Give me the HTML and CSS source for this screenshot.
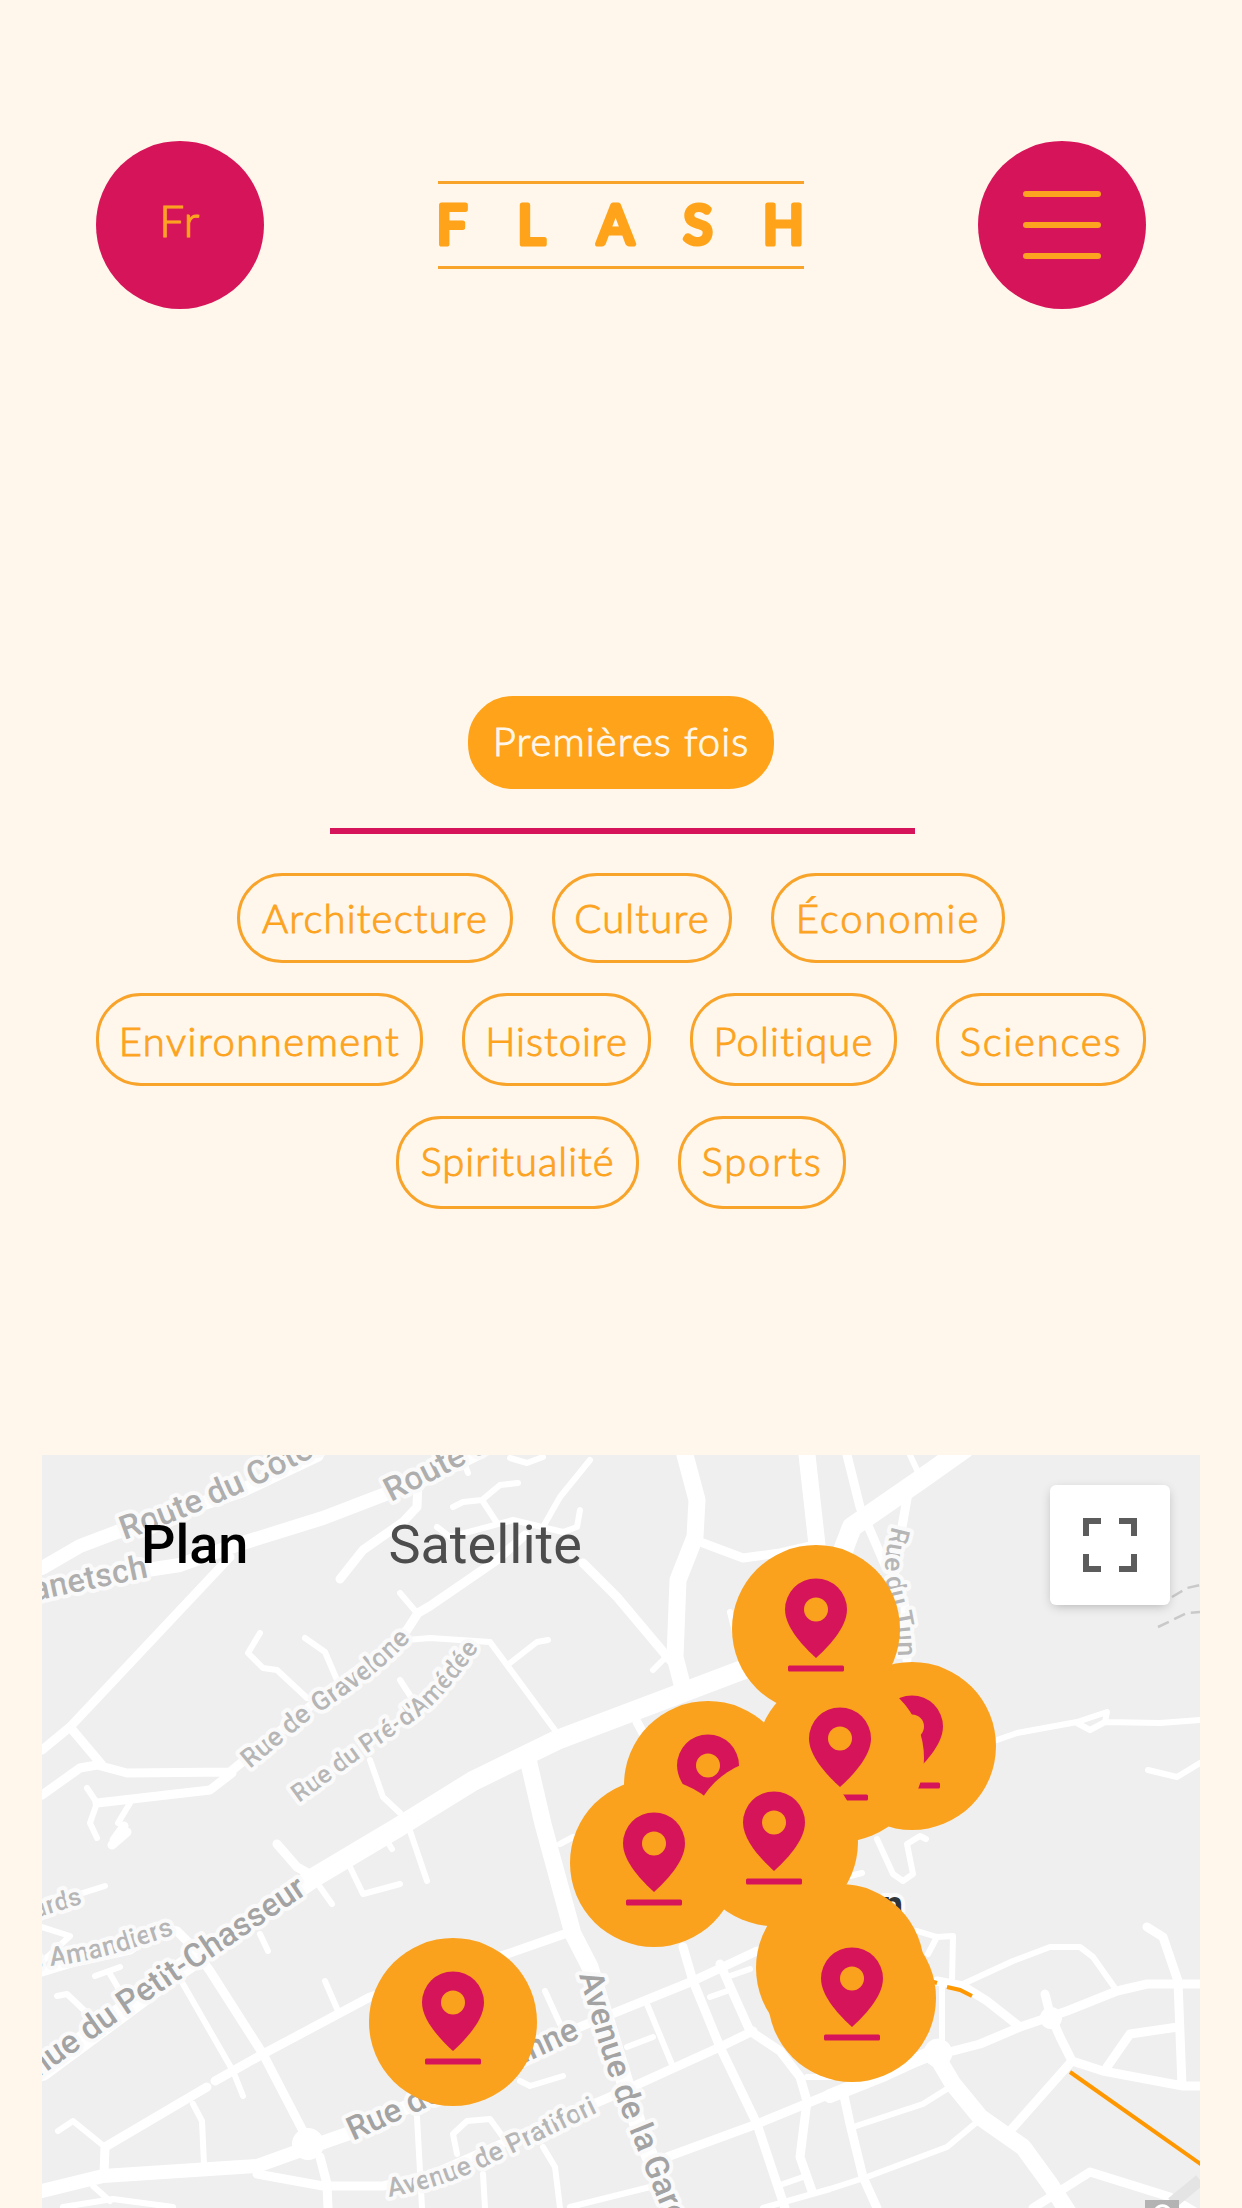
FILE: index.html
```html
<!DOCTYPE html>
<html lang="fr">
<head>
<meta charset="utf-8">
<title>Flash</title>
<link rel="stylesheet" href="styles.css">
</head>
<body>
<header class="header">
  <button class="round lang">Fr</button>
  <svg class="logo" viewBox="0 0 366 88" role="img" aria-label="Flash">
    <rect width="366" height="3"/>
    <rect y="85" width="366" height="3"/>
    <text y="63.300" x="-1.200 79.500 159.500 245.500 325">FLASH</text>
  </svg>
  <button class="round menu" aria-label="Menu"><span></span><span></span><span></span></button>
</header>

<nav class="filters">
  <div class="row first"><a class="tag active w-premieres">Premières fois</a></div>
  <hr class="rule">
  <div class="row short"><a class="tag w-architecture">Architecture</a><a class="tag w-culture">Culture</a><a class="tag w-economie">Économie</a></div>
  <div class="row low"><a class="tag w-environnement">Environnement</a><a class="tag w-histoire">Histoire</a><a class="tag w-politique">Politique</a><a class="tag w-sciences">Sciences</a></div>
  <div class="row"><a class="tag w-spiritualite">Spiritualité</a><a class="tag w-sports">Sports</a></div>
</nav>

<section class="map">
  <svg class="tiles" viewBox="42 1455 1158 753">
    <defs>
      <path id="l1" d="M124 1540Q175 1522 218 1503L258 1485L350 1438"/>
      <path id="l2" d="M34 1601L149 1577"/>
      <path id="l3" d="M391 1502L467 1463L520 1433"/>
      <path id="l4" d="M250 1769L310 1719Q337 1701 362 1683Q392 1661 420 1629"/>
      <path id="l5" d="M299 1803L359 1759L411 1723Q444 1700 484 1640"/>
      <path id="l6" d="M892 1526C883 1562 883 1572 890 1600S898 1640 898 1670"/>
      <path id="l7" d="M36 1918L94 1900"/>
      <path id="l8" d="M31 1971L50 1966C90 1962 130 1950 178 1933"/>
      <path id="l9" d="M38 2078L125 2016L320 1885"/>
      <path id="l10" d="M353 2141L595 2031"/>
      <path id="l11" d="M389 2197Q435 2189 474 2172L615 2104"/>
      <path id="l12" d="M579 1975L597 2037L617 2100L700 2302"/>
      <g id="pin">
        <circle class="disc" r="84"/>
        <path d="M0 29C-11 19-31-1-31-19.500A31 31 0 0 1 31-19.500C31-1 11 19 0 29Z"/>
        <rect x="-28" y="36.500" width="56" height="6" rx="1.500"/>
        <circle class="disc" cy="-19.500" r="12"/>
      </g>
    </defs>
    <g class="roads">
      <g class="xs">
        <path d="M260 1633L248 1653L263 1668L277 1670L307 1698M305 1638L325 1652L337 1680M400 1593L417 1613M400 1680L413 1700M370 1760L383 1797L400 1813"/>
        <path d="M453 1507L463 1502L482 1500L497 1523M482 1500L500 1485L518 1483M580 1510L577 1527L563 1532L513 1520L450 1537L437 1527M590 1460L560 1497L543 1527M510 1458L527 1463L543 1457M463 1460L468 1473"/>
        <path d="M407 1640L430 1638L490 1642L560 1737M510 1663L537 1642L548 1640M653 1670L667 1656M910 1455L917 1470"/>
        <path d="M997 1740L1017 1733L1077 1722L1107 1712L1105 1722L1090 1730L1077 1723M1105 1722L1160 1723L1200 1720M1148 1770L1177 1777L1200 1763"/>
        <path d="M87 1788L97 1803L90 1823L97 1838M130 1803L118 1823M42 1906L105 1886M42 1927L70 1936L43 1961M183 1984L233 2071L243 2096M58 2131L73 2121L105 2147M193 2104L202 2121L204 2164"/>
        <path d="M410 1831L427 1881M350 1867L363 1894L400 1884M320 1887L332 1904M387 1841L392 1849M260 1934L268 1951M325 1981L338 2011M95 1976L120 1967M110 1974L120 1991M57 1996L67 1994L88 2014M93 2186L110 2201M63 2207L113 2199L173 2207"/>
        <path d="M417 2117L422 2208M545 1991L560 2024M710 1997L727 1991M727 1977L750 1969M647 2004L673 2067M627 2047L653 2037M570 2207L650 2187M543 2147L555 2167L560 2208M457 2154L453 2134L467 2121L490 2119L503 2137M483 2174L485 2208M520 2081L530 2086L563 2076M783 2184L803 2177M560 1844L573 1837"/>
        <path d="M877 1839L893 1874L903 1881L913 1874L907 1844L920 1836L926 1839M917 1931L937 1937L953 1936L952 1981M937 1937L928 1954M963 1984L1013 1961L1050 1947L1080 1947L1093 1957L1117 1991M853 2127L923 2104L950 2087M942 1984L942 2044M763 2208L830 2189L867 2177L947 2147L977 2122M850 1876L862 1873M807 2077L850 2077M730 1612L737 1640"/>
      </g>
      <g class="sm">
        <path d="M230 1557L70 1727L42 1750M70 1727L102 1765M42 1795L80 1768L97 1765L127 1773L230 1772L330 1690L380 1653L407 1630L418 1613L430 1606L497 1560L525 1535M97 1803L210 1790L232 1773"/>
        <path d="M340 1579L363 1550L403 1522L417 1507L418 1480M127 1832L112 1845M124 1826L114 1840M583 1563L617 1597L670 1660M703 1543L743 1558L780 1553L815 1545M847 1455L860 1507L885 1565M908 1493L902 1527L890 1560L905 1607L907 1660M637 1722L643 1733"/>
        <path d="M42 1972L75 1962L130 1950L160 1928L177 1931L190 1944L210 1971L263 2054L303 2131M215 2081L263 2054L370 1997L507 1954L573 1931M105 2147L207 2087M105 2147L104 2174M277 1844L297 1867L313 1876"/>
        <path d="M257 2174L323 2186L383 2186L430 2175L510 2140L610 2097L720 2047L753 2031M320 2157L327 2184L328 2208M683 1947L693 1981L720 2047L757 2124L785 2208M720 1964L750 2031L780 2051L800 2077L807 2101L800 2157L812 2191"/>
        <path d="M667 2157L757 2124L830 2094L930 2057M843 2091L850 2124L863 2177L877 2208M953 2051L980 2044L1020 2027L1067 2011L1117 1991L1147 1984L1200 1984M937 1981L963 1986L987 2001L1020 2027M1147 1927L1163 1937L1178 1981L1182 2086M1045 1994L1050 2014L1060 2037L1072 2061L1103 2071L1183 2086L1200 2086M1107 2067L1130 2034L1178 2027M1072 2061L1010 2131M1033 2208L1090 2172L1170 2197L1200 2215"/>
        <path d="M407 2107L570 2031L693 1981L757 1951"/>
      </g>
      <g class="md">
        <path d="M42 1568L80 1546L117 1532L243 1490L317 1455M35 1588L147 1570L180 1565L230 1547L323 1518L383 1495L430 1477L480 1452"/>
        <path d="M42 2191L103 2176L257 2166L307 2148L347 2134L407 2107M830 2096L885 2074L937 2050"/>
        <circle cx="308" cy="2144" r="9"/><circle cx="1051" cy="2018" r="4"/>
      </g>
      <g class="lg">
        <path d="M685 1455L697 1500L695 1537L678 1580L675 1657L684 1692M807 1455L817 1545L816 1640M527 1755L543 1824L573 1934L590 1967L617 2057L643 2141L673 2208M937 2057L953 2084L980 2117L1023 2147L1050 2184L1070 2215"/>
      </g>
      <path class="xl" d="M42 2071L173 1974L313 1878L397 1828L473 1781L557 1740L663 1700L750 1667L816 1640L845 1545L852 1527L920 1480L965 1448"/>
      <circle class="knot" cx="938" cy="2053" r="14"/>
    </g>
    <path class="trail" d="M1172 1597L1187 1588L1200 1585M1158 1627L1187 1613L1200 1612"/>
    <path class="rail" d="M930 1981L937 1983M947 1987L960 1990L972 1996M1070 2072L1202 2165"/>
    <path class="shade" d="M1172 2203L1200 2180"/>
    <rect class="badge" x="1145" y="2200" width="34" height="8"/>
    <path class="badge-mark" d="M1156 2209A8 8 0 0 1 1169 2209"/>
    <g class="labels">
      <g class="major">
        <text><textPath href="#l1">Route du Côteau</textPath></text>
        <text><textPath href="#l2">anetsch</textPath></text>
        <text><textPath href="#l3">Route du</textPath></text>
        <text class="dark"><textPath href="#l9">nue du Petit-Chasseur</textPath></text>
        <text class="dark"><textPath href="#l10" textLength="250">Rue de Lausanne</textPath></text>
        <text class="dark"><textPath href="#l12">Avenue de la Gare</textPath></text>
      </g>
      <g class="minor">
        <text><textPath href="#l4">Rue de Gravelone</textPath></text>
        <text class="tight"><textPath href="#l5">Rue du Pré-d'Amédée</textPath></text>
        <text><textPath href="#l6">Rue du Tun</textPath></text>
        <text class="tight"><textPath href="#l7">ards</textPath></text>
        <text><textPath href="#l8">s Amandiers</textPath></text>
        <text><textPath href="#l11">Avenue de Pratifori</textPath></text>
      </g>
      <text class="city" x="903" y="1918">Sion</text>
    </g>
    <g class="pins">
      <use href="#pin" x="816" y="1629"/>
      <use href="#pin" x="912" y="1746"/>
      <use href="#pin" x="840" y="1758"/>
      <use href="#pin" x="708" y="1785"/>
      <use href="#pin" x="774" y="1842"/>
      <use href="#pin" x="654" y="1863"/>
      <use href="#pin" x="840" y="1968"/>
      <use href="#pin" x="852" y="1998"/>
      <use href="#pin" x="453" y="2022"/>
    </g>
  </svg>
  <div class="controls">
    <div class="types"><span class="type selected">Plan</span><span class="type">Satellite</span></div>
    <button class="full" aria-label="Plein écran">
      <svg viewBox="0 0 54 54"><path d="M0 0H18V6H6V18H0ZM36 0H54V18H48V6H36ZM0 36H6V48H18V54H0ZM48 36H54V54H36V48H48Z"/></svg>
    </button>
  </div>
</section>
</body>
</html>
```
FILE: styles.css
```css
* { box-sizing: border-box; }
html, body { margin: 0; height: 2208px; overflow: hidden; }
body {
  background: #fff7eb;
  color: #fca31f;
  font-family: Lato, "Open Sans", sans-serif;
  font-weight: 300;
}
button { border: 0; padding: 0; font: inherit; color: inherit; }

.header {
  display: flex;
  justify-content: space-between;
  align-items: center;
  padding: 141px 96px 0;
}
.round {
  width: 168px;
  height: 168px;
  border-radius: 50%;
  background: #d61459;
}
.lang {
  padding-bottom: 10px;
  font-size: 44px;
  letter-spacing: 1.5px;
  -webkit-text-stroke: 1.2px currentColor;
}
.menu {
  display: flex;
  flex-direction: column;
  align-items: center;
  justify-content: center;
  gap: 25px;
}
.menu span { width: 78px; height: 6px; border-radius: 3px; background: #fca31f; }
.logo { width: 366px; height: 88px; fill: #f8a32a; }
.logo text {
  font: 400 53.5px Lato, sans-serif;
  fill: #ffa31a;
  stroke: #ffa31a;
  stroke-width: 5.2px;
  stroke-linejoin: round;
}

.filters { padding-top: 387px; }
.row { display: flex; justify-content: center; gap: 39px; margin-bottom: 30px; }
.row.first { margin-bottom: 39px; }
.rule { width: 585px; height: 6px; margin: 0 327px 39px 330px; border: 0; background: #d61459; }
.tag {
  height: 93px;
  border: 3px solid #f8a32a;
  border-radius: 45px;
  font-size: 40px;
  letter-spacing: 1.2px;
  font-variant-ligatures: none;
  line-height: 85px;
  text-align: center;
  white-space: nowrap;
  -webkit-text-stroke: 1px currentColor;
}
.short .tag { height: 90px; }
.low .tag { line-height: 90px; }
.active { background: #ffa31a; border-color: #ffa31a; color: #fff7eb; letter-spacing: 1.1px; }
.w-premieres { width: 306px; }
.w-architecture { width: 276px; }
.w-culture { width: 180px; }
.w-economie { width: 234px; letter-spacing: 1.9px; }
.w-environnement { width: 327px; letter-spacing: 1.5px; }
.w-histoire { width: 189px; letter-spacing: 1px; }
.w-politique { width: 207px; }
.w-sciences { width: 210px; letter-spacing: 1.8px; }
.w-spiritualite { width: 243px; letter-spacing: 1px; }
.w-sports { width: 168px; letter-spacing: 1.8px; }

.map {
  display: grid;
  width: 1158px;
  height: 753px;
  margin: 246px auto 0;
  background: #efefef;
  overflow: hidden;
  font-family: Roboto, sans-serif;
  font-weight: 400;
}
.tiles, .controls { grid-area: 1 / 1; }
.tiles { width: 1158px; height: 753px; }
.roads { fill: none; stroke: #fff; stroke-linecap: round; stroke-linejoin: round; }
.xs { stroke-width: 6px; }
.sm { stroke-width: 9px; }
.md { stroke-width: 14px; }
.lg { stroke-width: 17px; }
.xl { stroke-width: 20px; }
.roads .knot { fill: #fff; }
.trail { fill: none; stroke: #c9c9c9; stroke-width: 2.5px; stroke-dasharray: 12 6; }
.rail { fill: none; stroke: #ff9800; stroke-width: 4px; }
.shade { stroke: #e4e4e4; stroke-width: 12px; }
.badge { fill: #b3b3b3; }
.badge-mark { fill: none; stroke: #fff; stroke-width: 3px; }
.labels text {
  paint-order: stroke;
  stroke: #fafafa;
  stroke-width: 8px;
  stroke-linejoin: round;
}
.major { font-size: 33px; font-weight: 500; fill: #aeaeae; }
.major .dark { fill: #a3a3a3; }
.minor { font-size: 26.5px; font-weight: 500; fill: #b6b6b6; }
.minor .tight { font-size: 25px; }
.labels .city { font-size: 38px; font-weight: 700; fill: #2f3438; text-anchor: end; }
.pins { fill: #d61459; }
.disc { fill: #faa21e; }

.controls {
  display: flex;
  justify-content: space-between;
  align-items: flex-start;
  padding: 30px 30px 0 99px;
}
.types { display: flex; gap: 140px; font-size: 54px; line-height: 119px; color: #4d4d4d; }
.selected { font-weight: 500; color: #000; }
.full {
  display: flex;
  align-items: center;
  justify-content: center;
  width: 120px;
  height: 120px;
  border-radius: 6px;
  background: #fff;
  box-shadow: 0 3px 12px -3px rgba(0, 0, 0, .3);
}
.full svg { width: 54px; height: 54px; fill: #5c5c5c; }
```
